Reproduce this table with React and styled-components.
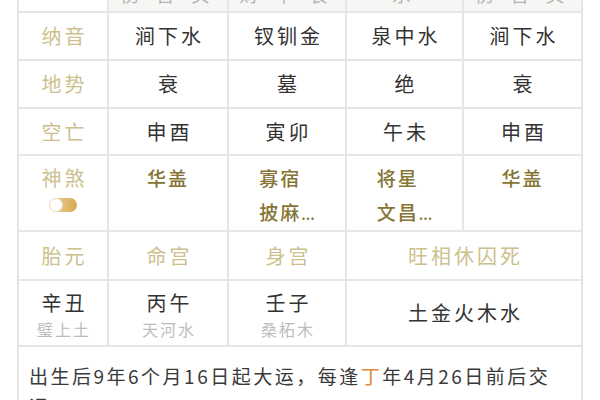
import React from 'react'
import styled, { createGlobalStyle } from 'styled-components'

const GlobalStyle = createGlobalStyle`
  html, body {
    margin: 0;
    padding: 0;
    background: #ffffff;
    overflow: hidden;
  }
  body {
    font-family: "Noto Sans CJK SC", "Noto Sans", sans-serif;
  }
`

const Table = styled.div`
  margin-left: 17px;
  width: 566px;
  display: grid;
  grid-template-columns: 88px 118px 116px 115px 117px;
  gap: 2px;
  padding: 0 2px 2px;
  box-sizing: border-box;
  background: #e6e6e6;
`

const HeadCell = styled.div`
  height: 11px;
  overflow: hidden;
  background: ${props => props.blank ? '#ffffff' : '#f6f6f4'};
  text-align: center;
  color: #b4b4b4;
  font-size: 19px;
  letter-spacing: 6px;
  line-height: 24px;

  span {
    display: block;
    margin-top: -18px;
  }
`

const Cell = styled.div`
  background: #ffffff;
  height: ${props => props.h}px;
  display: flex;
  flex-direction: column;
  align-items: center;
  justify-content: ${props => props.top ? 'flex-start' : 'center'};
  padding-top: ${props => props.pt || 0}px;
  box-sizing: border-box;
  grid-column: ${props => props.span ? `span ${props.span}` : 'auto'};
`

const Label = styled.div`
  color: #cdbf8e;
  font-size: 20px;
  letter-spacing: 3px;
  padding-left: 3px;
  line-height: ${props => props.lh || 28}px;
`

const Value = styled.div`
  color: #333333;
  font-size: 20px;
  letter-spacing: 3px;
  padding-left: 3px;
  line-height: 26px;
`

const SubValue = styled.div`
  color: #bdbdbd;
  font-size: 16px;
  letter-spacing: 2px;
  padding-left: 2px;
  line-height: 26px;
`

const Stars = styled.div`
  color: #857434;
  font-size: 19px;
  font-weight: 500;
  letter-spacing: 2px;
  line-height: 34px;
  text-align: left;
`

const Dots = styled.span`
  letter-spacing: 0;
  font-size: 15px;
`

const Toggle = styled.div`
  width: 28px;
  height: 14px;
  border-radius: 7px;
  background: linear-gradient(90deg, #f0d9a6, #d9a64e);
  position: relative;
  margin-top: 3px;

  &::after {
    content: '';
    position: absolute;
    left: 0;
    top: 0;
    width: 12px;
    height: 12px;
    border-radius: 50%;
    background: #ffffff;
    border: 1px solid #eadfc6;
  }
`

const Note = styled.div`
  grid-column: 1 / -1;
  background: #ffffff;
  height: 80px;
  padding: 14px 0 0 10px;
  box-sizing: border-box;
  color: #3a3a3a;
  font-size: 19px;
  letter-spacing: 2.5px;
  line-height: 30px;
`

const Hi = styled.span`
  color: #e0893a;
`

const heads = ['', '伤 官 癸', '财 甲 食', '杀', '伤 官 癸']

const rows = [
  { label: '纳音', h: 46, values: ['涧下水', '钗钏金', '泉中水', '涧下水'] },
  { label: '地势', h: 46, values: ['衰', '墓', '绝', '衰'] },
  { label: '空亡', h: 45, values: ['申酉', '寅卯', '午未', '申酉'] },
]

const stars = [
  [{ t: '华盖' }],
  [{ t: '寡宿' }, { t: '披麻', more: true }],
  [{ t: '将星' }, { t: '文昌', more: true }],
  [{ t: '华盖' }],
]

const pillars = [
  { main: '辛丑', sub: '璧上土' },
  { main: '丙午', sub: '天河水' },
  { main: '壬子', sub: '桑柘木' },
]

export default function App() {
  return (
    <>
      <GlobalStyle />
      <Table>
        {heads.map((h, i) => (
          <HeadCell key={i} blank={i === 0}><span>{h || '\u00a0'}</span></HeadCell>
        ))}

        {rows.map(r => (
          <React.Fragment key={r.label}>
            <Cell h={r.h}><Label>{r.label}</Label></Cell>
            {r.values.map((v, i) => (
              <Cell key={i} h={r.h}><Value>{v}</Value></Cell>
            ))}
          </React.Fragment>
        ))}

        <Cell h={74} top pt={5}>
          <Label lh={34}>神煞</Label>
          <Toggle />
        </Cell>
        {stars.map((s, i) => (
          <Cell key={i} h={74} top pt={5}>
            <Stars>
              {s.map(item => (
                <div key={item.t}>{item.t}{item.more && <Dots>...</Dots>}</div>
              ))}
            </Stars>
          </Cell>
        ))}

        <Cell h={47}><Label>胎元</Label></Cell>
        <Cell h={47}><Label>命宫</Label></Cell>
        <Cell h={47}><Label>身宫</Label></Cell>
        <Cell h={47} span={2}><Label>旺相休囚死</Label></Cell>

        {pillars.map(p => (
          <Cell key={p.main} h={64} top pt={9}>
            <Value>{p.main}</Value>
            <SubValue>{p.sub}</SubValue>
          </Cell>
        ))}
        <Cell h={64} span={2}><Value>土金火木水</Value></Cell>

        <Note>
          出生后9年6个月16日起大运，每逢<Hi>丁</Hi>年4月26日前后交<br />运
        </Note>
      </Table>
    </>
  )
}
